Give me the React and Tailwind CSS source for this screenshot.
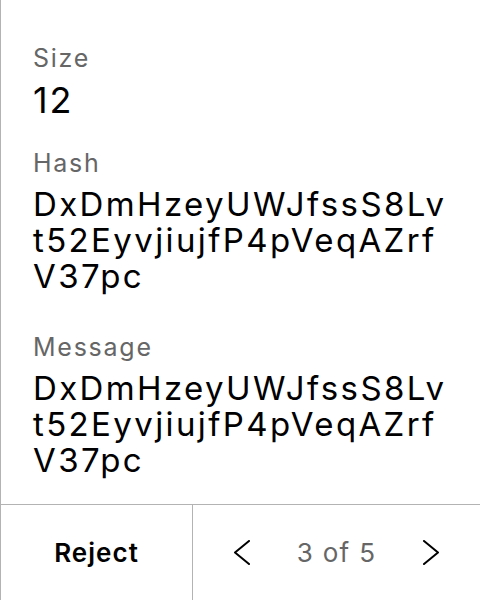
import React from "react";

const HASH = "DxDmHzeyUWJfssS8Lvt52EyvjiujfP4pVeqAZrfV37pc";

function Field({ label, value, big, className }) {
  return (
    <div className={className}>
      <p className="text-[25px] leading-[32px] tracking-[0.07em] text-[#666666]">{label}</p>
      {big ? (
        <p className="mt-[6px] text-[36px] leading-[40px] tracking-[0.05em] text-black">{value}</p>
      ) : (
        <p className="mt-[7px] text-[33px] leading-[36px] tracking-[0.072em] text-black break-all">
          {value}
        </p>
      )}
    </div>
  );
}

function Chevron({ dir }) {
  return (
    <svg width="18" height="25" viewBox="0 0 18 25" fill="none">
      <polyline
        points={dir === "left" ? "16,1 2,12.5 16,24" : "2,1 16,12.5 2,24"}
        stroke="black"
        strokeWidth="2"
        strokeLinecap="round"
        strokeLinejoin="round"
      />
    </svg>
  );
}

export default function App() {
  return (
    <div className="w-[480px] h-[600px] bg-white border-l border-[#b3b3b3] flex flex-col font-['Inter',sans-serif]">
      <div className="flex-1 pl-8 pr-8 pt-[42px]">
        <Field label="Size" value="12" big />
        <Field label="Hash" value={HASH} className="mt-[27px]" />
        <Field label="Message" value={HASH} className="mt-[37px]" />
      </div>
      <div className="h-[96px] border-t border-[#b3b3b3] flex">
        <button className="w-[192px] border-r border-[#b3b3b3] flex items-center justify-center text-[26px] font-semibold tracking-[0.04em] text-black">
          Reject
        </button>
        <div className="flex-1 flex items-center justify-center gap-[46px]">
          <Chevron dir="left" />
          <span className="text-[26px] tracking-[0.05em] text-[#666666]">3 of 5</span>
          <Chevron dir="right" />
        </div>
      </div>
    </div>
  );
}
